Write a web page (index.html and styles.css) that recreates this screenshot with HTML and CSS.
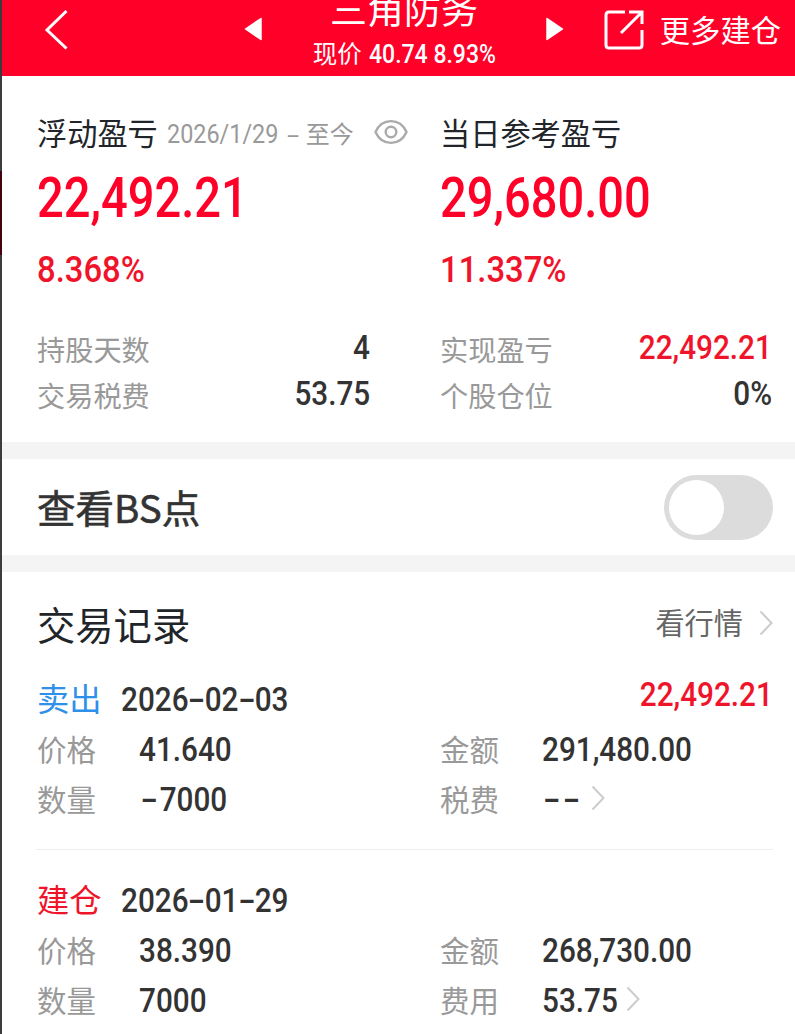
FILE: index.html
```html
<!DOCTYPE html>
<html lang="zh-CN">
<head>
    <meta charset="UTF-8">
    <meta name="viewport" content="width=device-width, initial-scale=1.0">
    <title>三角防务</title>
    <link rel="stylesheet" href="styles.css">
</head>
<body>
    <div class="page">
        <header class="topbar">
            <svg class="back" width="26" height="42" viewBox="0 0 26 42"><path d="M23.500 2 L4 21 L23.500 39.500"/></svg>
            <svg class="arrow" width="20" height="26" viewBox="0 0 20 26"><path d="M18 2.500 V23.500 L2.500 13 Z"/></svg>
            <div class="stock">
                <h1>三角防务</h1>
                <p>现价 <span class="num quote">40.74 8.93%</span></p>
            </div>
            <svg class="arrow" width="20" height="26" viewBox="0 0 20 26"><path d="M2 2.500 V23.500 L17.500 13 Z"/></svg>
            <div class="more">
                <svg width="42" height="42" viewBox="0 0 42 42"><path d="M22 3 H6 Q3 3 3 6 V36 Q3 39 6 39 H36 Q39 39 39 36 V21"/><path d="M18 24 L38 4 M26 3 H39 V15"/></svg>
                <span>更多建仓</span>
            </div>
        </header>

        <section class="summary">
            <div class="col">
                <div class="head">
                    <h2>浮动盈亏</h2>
                    <span class="range"><span class="num range-date">2026/1/29</span><span class="dash">-</span>至今</span>
                    <svg class="eye" width="34" height="26" viewBox="0 0 34 26"><path d="M1.500 13 C8 -1.500 26 -1.500 32.500 13 C26 27.500 8 27.500 1.500 13 Z"/><circle cx="17" cy="13" r="5.300"/></svg>
                </div>
                <div class="big"><span class="num">22,492.21</span></div>
                <div class="percent"><span class="num">8.368%</span></div>
                <div class="stat"><span>持股天数</span><b class="num">4</b></div>
                <div class="stat"><span>交易税费</span><b class="num">53.75</b></div>
            </div>
            <div class="col">
                <div class="head">
                    <h2>当日参考盈亏</h2>
                </div>
                <div class="big"><span class="num">29,680.00</span></div>
                <div class="percent"><span class="num">11.337%</span></div>
                <div class="stat"><span>实现盈亏</span><b class="num red">22,492.21</b></div>
                <div class="stat"><span>个股仓位</span><b class="num">0%</b></div>
            </div>
        </section>

        <section class="bs">
            <h2>查看BS点</h2>
            <div class="toggle"></div>
        </section>

        <section class="records">
            <div class="records-head">
                <h2>交易记录</h2>
                <span class="link">看行情</span>
                <svg class="chevron" width="14" height="26" viewBox="0 0 14 26"><path d="M1.500 1.500 L12.500 13 L1.500 24.500"/></svg>
            </div>

            <div class="record">
                <div class="record-title">
                    <span class="type sell">卖出</span>
                    <b class="num date">2026<span class="dash">-</span>02<span class="dash">-</span>03</b>
                    <b class="num red profit">22,492.21</b>
                </div>
                <div class="fields">
                    <span>价格</span><b class="num">41.640</b>
                    <span>金额</span><b class="num">291,480.00</b>
                    <span>数量</span><b class="num minus"><span class="dash">-</span>7000</b>
                    <span>税费</span>
                    <div class="fee">
                        <b class="num none"><span class="dash">-</span><span class="dash">-</span></b>
                        <svg class="chevron" width="14" height="26" viewBox="0 0 14 26"><path d="M1.500 1.500 L12.500 13 L1.500 24.500"/></svg>
                    </div>
                </div>
            </div>

            <div class="record">
                <div class="record-title">
                    <span class="type open">建仓</span>
                    <b class="num date">2026<span class="dash">-</span>01<span class="dash">-</span>29</b>
                </div>
                <div class="fields">
                    <span>价格</span><b class="num">38.390</b>
                    <span>金额</span><b class="num">268,730.00</b>
                    <span>数量</span><b class="num">7000</b>
                    <span>费用</span>
                    <div class="fee">
                        <b class="num">53.75</b>
                        <svg class="chevron" width="14" height="26" viewBox="0 0 14 26"><path d="M1.500 1.500 L12.500 13 L1.500 24.500"/></svg>
                    </div>
                </div>
            </div>
        </section>
    </div>
</body>
</html>
```
FILE: styles.css
```css
* {
    margin: 0;
    padding: 0;
    box-sizing: border-box;
}

body {
    height: 1034px;
    overflow: hidden;
    background: #fff;
    color: #212529;
    font-family: "Noto Sans CJK SC", sans-serif;
    white-space: nowrap;
}

h1, h2 {
    font-weight: 400;
}

svg {
    display: block;
    flex: none;
    fill: none;
}

/* thin dark edge of the screen on the left */
.page {
    height: 1034px;
    padding-left: 2px;
    background: linear-gradient(#3c3c40 0 171px, #43000f 171px 255px, #3c3c40 255px) left / 2px 100% no-repeat;
}

/* narrow digits */
.num {
    display: inline-block;
    font-family: Roboto, "Noto Sans CJK SC", sans-serif;
    font-weight: 500;
    transform: scaleX(0.9);
    transform-origin: left;
}

.dash {
    display: inline-block;
    width: 18px;
    text-align: center;
    transform: scaleX(1.7);
}

.red {
    color: #f0142b;
}

/* top bar */
.topbar {
    display: flex;
    align-items: flex-start;
    height: 76px;
    padding: 9px 14px 0 41px;
    background: #ff0029;
    color: #fff;
}

.back {
    stroke: #fff;
    stroke-width: 3;
    margin-right: 174px;
}

.arrow {
    fill: #fff;
    stroke: #fff;
    stroke-width: 1.5;
    stroke-linejoin: round;
    margin-top: 7px;
}

.stock {
    flex: 1;
    margin-top: -28px;
    text-align: center;
}

.stock h1 {
    font-size: 37px;
    line-height: 54px;
}

.stock p {
    margin-top: 2px;
    font-size: 24.5px;
    line-height: 32px;
}

.quote {
    width: 126px;
    margin-left: 2px;
    text-align: left;
    font-size: 25px;
    transform: scaleX(0.92);
}

.more {
    display: flex;
    align-items: center;
    gap: 15px;
    margin-left: 38px;
    font-size: 30.3px;
    line-height: 40px;
}

.more span {
    margin-top: -2px;
}

.more svg {
    stroke: #fff;
    stroke-width: 3;
}

/* profit summary */
.summary {
    display: grid;
    grid-template-columns: 333px 332px;
    column-gap: 70px;
    height: 366px;
    padding: 31px 0 0 35px;
}

.head {
    display: flex;
    align-items: center;
    height: 50px;
}

.head h2 {
    font-size: 30.2px;
}

.range {
    margin-left: 9px;
    color: #999;
    font-size: 24px;
}

.range-date {
    width: 113px;
    font-weight: 400;
    font-size: 26px;
}

.range .dash {
    width: 26px;
}

.eye {
    margin-left: 20px;
    stroke: #aaa;
    stroke-width: 2.4;
}

.big {
    height: 79px;
    line-height: 72px;
    font-size: 56px;
    color: #ff0029;
}

.big .num {
    transform: scaleX(0.84);
}

.percent {
    height: 62px;
    line-height: 59px;
    font-size: 37.5px;
    color: #f0142b;
}

.percent .num {
    transform: scaleX(0.875);
}

.stat {
    display: flex;
    justify-content: space-between;
    height: 46px;
    line-height: 46px;
    font-size: 28.2px;
    color: #999;
}

.percent + .stat {
    margin-top: 28px;
}

.stat .num {
    font-size: 33px;
    line-height: 43px;
    color: #333;
    transform-origin: right;
}

.num.red {
    color: #f0142b;
}

/* bs switch */
.bs {
    display: flex;
    align-items: center;
    justify-content: space-between;
    height: 130px;
    padding: 0 22px 0 35px;
    border: solid #f4f4f4;
    border-width: 17px 0;
}

.bs h2 {
    margin-top: -2px;
    font-size: 38.5px;
    color: #333;
    -webkit-text-stroke: 0.6px #333;
}

.toggle {
    width: 109px;
    height: 65px;
    padding: 5px;
    border-radius: 33px;
    background: #dcdcdc;
}

.toggle::before {
    content: "";
    display: block;
    width: 55px;
    height: 55px;
    border-radius: 50%;
    background: #fff;
}

/* trade records */
.records {
    padding: 26px 22px 0 34px;
}

.records-head {
    display: flex;
    align-items: center;
    height: 51px;
    padding-left: 1px;
}

.records-head h2 {
    flex: 1;
    font-size: 38.3px;
}

.link {
    margin: -6px 16px 0 0;
    font-size: 29.2px;
    color: #666;
}

.chevron {
    stroke: #ccc;
    stroke-width: 2;
}

.records-head .chevron {
    margin-top: -2px;
}

.record {
    height: 201px;
    padding: 24px 0 0 1px;
    border-bottom: 1px solid #eee;
}

.record-title {
    display: flex;
    align-items: center;
    height: 50px;
}

.type {
    width: 84px;
    margin-top: -2px;
    font-size: 32.3px;
}

.sell {
    color: #2e90e8;
}

.open {
    color: #f0142b;
}

.date {
    flex: 1;
    margin-top: 2px;
    font-size: 33px;
    color: #333;
}

.profit {
    margin-top: -8px;
    font-size: 33px;
    transform-origin: right;
}

.fields {
    display: grid;
    grid-template-columns: 102px 301px 102px 1fr;
    grid-auto-rows: 50px;
    align-items: center;
    font-size: 29.5px;
    color: #999;
}

.fields .num {
    margin-top: 2px;
    font-size: 33px;
    color: #333;
}

.minus .dash {
    width: 23px;
}

.none {
    width: 49px;
}

.none .dash {
    width: 22px;
}

.fee {
    display: flex;
    align-items: center;
}
```
